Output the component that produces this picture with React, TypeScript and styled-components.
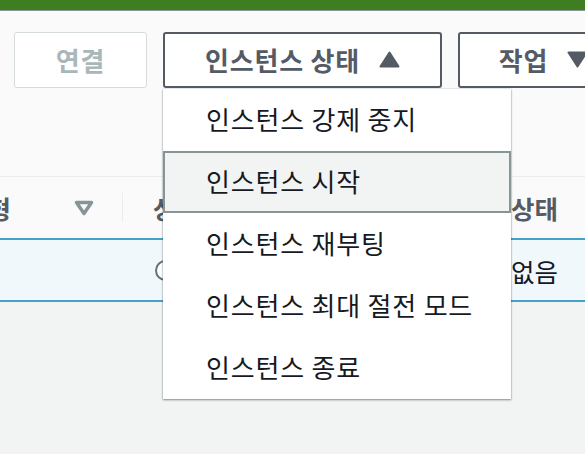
import React from "react";
import styled, { createGlobalStyle } from "styled-components";

const GlobalStyle = createGlobalStyle`
  html, body { margin: 0; padding: 0; }
  body {
    background: #f2f3f3;
    font-family: "Noto Sans CJK KR", "Noto Sans", sans-serif;
    overflow: hidden;
    width: 585px;
    height: 454px;
  }
`;

const Page = styled.div`
  width: 585px;
  height: 454px;
  display: flex;
  flex-direction: column;
  overflow: hidden;
  background: #f2f3f3;
`;

const TopBar = styled.div`
  height: 10px;
  background: #3e7d22;
  border-bottom: 1px solid #8d9596;
  flex: none;
`;

const Toolbar = styled.div`
  height: 165px;
  background: #fafafa;
  display: flex;
  align-items: flex-start;
  gap: 16px;
  padding: 21px 0 0 14px;
  box-sizing: border-box;
  flex: none;
`;

const Button = styled.button<{ $disabled?: boolean; $width: number }>`
  position: relative;
  box-sizing: border-box;
  width: ${(p) => p.$width}px;
  height: 56px;
  flex: none;
  display: flex;
  align-items: center;
  justify-content: center;
  gap: 19px;
  padding: 0 0 2px 0;
  border-radius: 3px;
  border: ${(p) => (p.$disabled ? "1.5px solid #d5dbdb" : "2px solid #545b64")};
  background: #ffffff;
  color: ${(p) => (p.$disabled ? "#aab7b8" : "#545b64")};
  font-family: "Noto Sans CJK KR", sans-serif;
  font-weight: 700;
  font-size: 26px;
  letter-spacing: 0.8px;
  white-space: nowrap;
  cursor: pointer;
`;

const Anchor = styled.div`
  position: relative;
  flex: none;
`;

const Caret = styled.svg`
  width: 21px;
  height: 17px;
  fill: #545b64;
  flex: none;
`;

const Menu = styled.ul`
  position: absolute;
  top: 57px;
  left: 0;
  width: 348px;
  margin: 0;
  padding: 0;
  list-style: none;
  background: #ffffff;
  box-shadow: 0 1px 2px rgba(0, 28, 36, 0.45), 0 0 1px rgba(0, 28, 36, 0.3);
  z-index: 10;
`;

const MenuItem = styled.li<{ $active?: boolean }>`
  box-sizing: border-box;
  height: 62px;
  display: flex;
  align-items: center;
  padding-bottom: 3px;
  font-size: 26px;
  letter-spacing: 0.8px;
  white-space: nowrap;
  color: #16191f;
  background: ${(p) => (p.$active ? "#f2f3f3" : "#ffffff")};
  border: ${(p) => (p.$active ? "2px solid #879596" : "2px solid transparent")};
  border-left-width: ${(p) => (p.$active ? "2px" : "0")};
  padding-left: ${(p) => (p.$active ? "41px" : "43px")};
`;

const Table = styled.div`
  display: flex;
  flex-direction: column;
  flex: none;
`;

const HeaderRow = styled.div`
  display: grid;
  grid-template-columns: 123px 388px 1fr;
  height: 62px;
  background: #fafafa;
  border-top: 1px solid #eaeded;
  box-sizing: border-box;
  align-items: center;
`;

const HeaderCell = styled.div<{ $pad?: number; $end?: boolean }>`
  display: flex;
  align-items: center;
  justify-content: ${(p) => (p.$end ? "flex-end" : "flex-start")};
  padding-left: ${(p) => p.$pad ?? 0}px;
  height: 100%;
  white-space: nowrap;
  overflow: hidden;
  font-weight: 700;
  font-size: 25.5px;
  letter-spacing: 0px;
  color: #545b64;
`;

const FirstHeader = styled(HeaderCell)`
  position: relative;
  overflow: visible;
  padding-right: 29px;
  &::after {
    content: "";
    position: absolute;
    right: 0;
    top: 16px;
    bottom: 16px;
    width: 1px;
    background: #eaeded;
  }
`;

const FilterIcon = styled.svg`
  width: 20px;
  height: 16px;
  margin-left: 63px;
  flex: none;
`;

const ClipLabel = styled.span`
  display: block;
  flex: none;
`;

const DataRow = styled.div`
  display: grid;
  grid-template-columns: 123px 388px 1fr;
  height: 64px;
  background: #f1f8fc;
  border-top: 2px solid #44a1ca;
  border-bottom: 2px solid #44a1ca;
  box-sizing: border-box;
  align-items: center;
`;

const DataCell = styled.div<{ $pad?: number }>`
  display: flex;
  align-items: center;
  padding-left: ${(p) => p.$pad ?? 0}px;
  white-space: nowrap;
  font-size: 25.5px;
  letter-spacing: 0px;
  color: #16191f;
`;

const Radio = styled.span`
  width: 17px;
  height: 17px;
  border: 2.5px solid #687078;
  border-radius: 50%;
  background: #ffffff;
  flex: none;
`;

const items = [
  "인스턴스 강제 중지",
  "인스턴스 시작",
  "인스턴스 재부팅",
  "인스턴스 최대 절전 모드",
  "인스턴스 종료",
];

export default function App() {
  return (
    <Page>
      <GlobalStyle />
      <TopBar />
      <Toolbar>
        <Button $disabled $width={133}>연결</Button>
        <Anchor>
          <Button $width={279}>
            인스턴스 상태
            <Caret viewBox="0 0 21 17">
              <path d="M10.5 1.5 L19.5 15.5 L1.5 15.5 Z" strokeLinejoin="round" stroke="#545b64" strokeWidth="2" />
            </Caret>
          </Button>
          <Menu>
            {items.map((t, i) => (
              <MenuItem key={t} $active={i === 1}>
                {t}
              </MenuItem>
            ))}
          </Menu>
        </Anchor>
        <Button $width={171}>
          작업
          <Caret viewBox="0 0 21 17">
            <path d="M1.5 1.5 L19.5 1.5 L10.5 15.5 Z" strokeLinejoin="round" stroke="#545b64" strokeWidth="2" />
          </Caret>
        </Button>
      </Toolbar>
      <Table>
        <HeaderRow>
          <FirstHeader $end>
            <ClipLabel>인스턴스 유형</ClipLabel>
            <FilterIcon viewBox="0 0 20 16">
              <path d="M2.5 2.5 L17.5 2.5 L10 13.5 Z" fill="none" stroke="#879596" strokeWidth="3.5" strokeLinejoin="round" />
            </FilterIcon>
          </FirstHeader>
          <HeaderCell $pad={30}>상태 검사</HeaderCell>
          <HeaderCell>상태</HeaderCell>
        </HeaderRow>
        <DataRow>
          <DataCell />
          <DataCell $pad={32}>
            <Radio />
          </DataCell>
          <DataCell>없음</DataCell>
        </DataRow>
      </Table>
    </Page>
  );
}
